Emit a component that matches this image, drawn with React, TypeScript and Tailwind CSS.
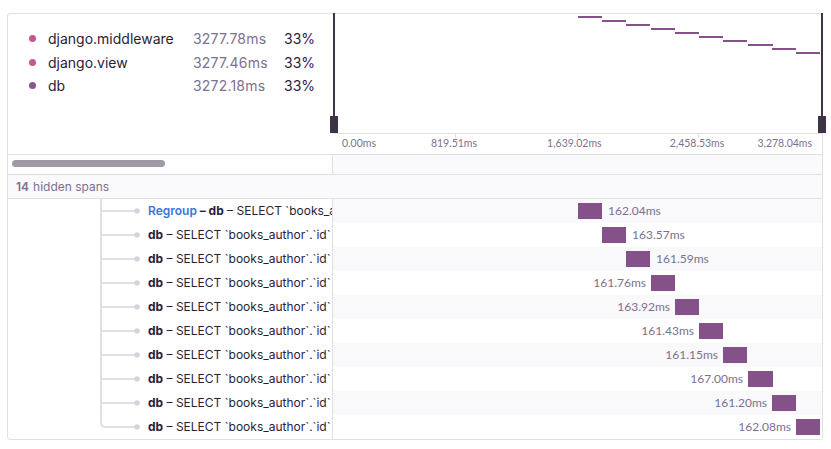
const legend = [
  { name: "django.middleware", dur: "3277.78ms", pct: "33%", color: "bg-[#c4588c]" },
  { name: "django.view", dur: "3277.46ms", pct: "33%", color: "bg-[#c25a8e]" },
  { name: "db", dur: "3272.18ms", pct: "33%", color: "bg-[#8b5493]" },
];

const spans = [
  { dur: "162.04ms", w: 24 },
  { dur: "163.57ms", w: 24 },
  { dur: "161.59ms", w: 24 },
  { dur: "161.76ms", w: 24 },
  { dur: "163.92ms", w: 24 },
  { dur: "161.43ms", w: 24 },
  { dur: "161.15ms", w: 24 },
  { dur: "167.00ms", w: 25 },
  { dur: "161.20ms", w: 24 },
  { dur: "162.08ms", w: 24 },
];

// left offset of each span inside the timeline column
const barLeft = (i: number) => Math.round(245 + 24.22 * i);

function Connector({ last }: { last: boolean }) {
  return (
    <svg width="48" height="24" className="shrink-0">
      <path
        d={last ? "M1 0 V8 Q1 12 5 12 H35" : "M1 0 V24 M1 12 H35"}
        fill="none"
        stroke="#e2dee7"
        strokeWidth="2"
      />
      <circle cx="37" cy="12" r="2.8" fill="#d6d1dc" />
    </svg>
  );
}

export default function App() {
  return (
    <div className="w-[831px] h-[449px] bg-white pt-[13px] pl-[7px] font-['Inter',sans-serif] text-[#2b1d38]">
      <div className="w-[816px] h-[427px] border border-[#e2dee6] rounded-[3px] flex flex-col">
        {/* minimap */}
        <div className="flex h-[141px] border-b border-[#e2dee6] shrink-0">
          <div className="w-[325px] pt-[13px] pl-[21px] text-[14px]">
            {legend.map((l) => (
              <div key={l.name} className="flex items-center h-[23.5px]">
                <div className={`w-[7px] h-[7px] rounded-full ${l.color}`} />
                <div className="w-[145px] ml-[12px]">{l.name}</div>
                <div className="w-[91px] text-[#80708f] tracking-[0.2px]">{l.dur}</div>
                <div>{l.pct}</div>
              </div>
            ))}
          </div>
          <div className="flex-1 flex flex-col">
            <div className="relative h-[119px]">
              {spans.map((s, i) => (
                <div
                  key={i}
                  className="absolute h-[2px] bg-[#845289]"
                  style={{ left: barLeft(i), top: 2 + 4 * i, width: s.w }}
                />
              ))}
              <div className="absolute left-0 -top-[1px] bottom-0 w-[2px] bg-[#3e3446]" />
              <div className="absolute -left-[3px] bottom-0 w-[8px] h-[17px] bg-[#3e3446]" />
              <div className="absolute right-[-1px] -top-[1px] bottom-0 w-[2px] bg-[#3e3446]" />
              <div className="absolute -right-[4px] bottom-0 w-[8px] h-[17px] bg-[#3e3446]" />
            </div>
            <div className="relative h-[21px] border-t border-[#e2dee6] font-['Lato',sans-serif] text-[10.5px] text-[#80708f]">
              <div className="absolute left-[122px] top-0 w-px h-[4px] bg-[#e2dee6]" />
              <div className="absolute left-[244px] top-0 w-px h-[4px] bg-[#e2dee6]" />
              <div className="absolute left-[365px] top-0 w-px h-[4px] bg-[#e2dee6]" />
              <div className="flex items-center h-full pl-[9px] pr-[10px] whitespace-nowrap">
                <span>0.00ms</span>
                <span className="ml-[55px]">819.51ms</span>
                <span className="ml-[70px]">1,639.02ms</span>
                <span className="ml-[68px]">2,458.53ms</span>
                <span className="ml-auto">3,278.04ms</span>
              </div>
            </div>
          </div>
        </div>

        {/* scrollbar */}
        <div className="flex h-[20px] border-b border-[#e2dee6] shrink-0">
          <div className="w-[325px] border-r border-[#e2dee6] pl-[4px] pt-[5px]">
            <div className="w-[153px] h-[7px] rounded-full bg-[#a09aa7]" />
          </div>
          <div className="flex-1 bg-[#faf9fb]" />
        </div>

        {/* hidden spans */}
        <div className="flex items-center h-[24px] border-b border-[#e2dee6] bg-[#faf9fb] pl-[8px] text-[12px] text-[#80708f] shrink-0">
          <span className="font-semibold">14</span>
          <span className="ml-[4px]">hidden spans</span>
        </div>

        {/* spans */}
        <div className="flex flex-col">
          {spans.map((s, i) => {
            const after = i < 3;
            return (
              <div key={i} className="flex h-[24px]">
                <div className="w-[325px] border-r border-[#e2dee6] flex items-center overflow-hidden pl-[92px] text-[12px] whitespace-nowrap">
                  <Connector last={i === spans.length - 1} />
                  {i === 0 ? (
                    <span>
                      <span className="font-semibold text-[#3d74db]">Regroup</span>
                      <span className="font-bold"> – db</span> – SELECT `books_author`.`id`
                    </span>
                  ) : (
                    <span>
                      <span className="font-bold">db</span> – SELECT `books_author`.`id`
                    </span>
                  )}
                </div>
                <div
                  className={`flex-1 flex items-center ${i % 2 === 0 ? "bg-[#f9f8fb]" : "bg-white"}`}
                >
                  <div className="shrink-0" style={{ width: barLeft(i) }} />
                  <div className="relative h-[16px] bg-[#845289]" style={{ width: s.w }}>
                    <span
                      className={`absolute top-1/2 -translate-y-1/2 font-['Lato',sans-serif] text-[12px] text-[#80708f] whitespace-nowrap ${
                        after ? "left-full ml-[6px]" : "right-full mr-[5px]"
                      }`}
                    >
                      {s.dur}
                    </span>
                  </div>
                </div>
              </div>
            );
          })}
        </div>
      </div>
    </div>
  );
}
